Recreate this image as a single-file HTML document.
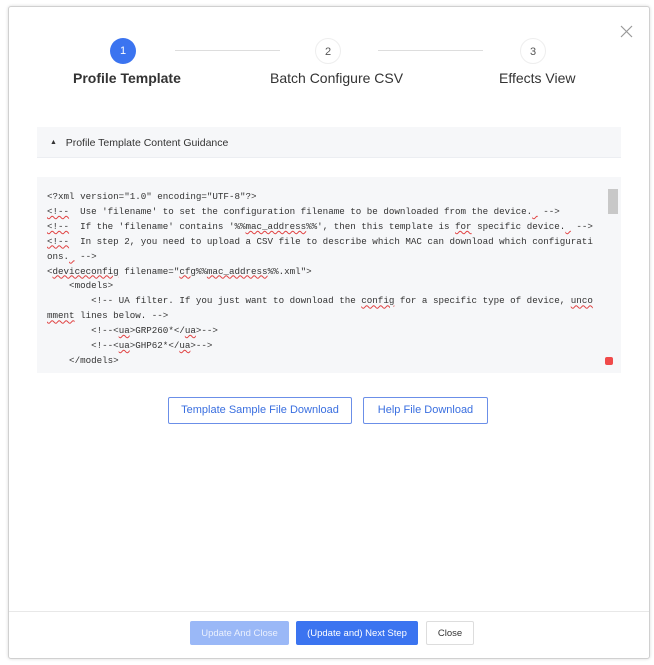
<!DOCTYPE html>
<html><head><style>
*{margin:0;padding:0;box-sizing:border-box}
body{width:654px;height:665px;background:#fff;font-family:"Liberation Sans",sans-serif;position:relative;overflow:hidden}
.modal{position:absolute;left:8px;top:6px;width:642px;height:653px;border:1px solid #d0d0d0;border-radius:3px;box-shadow:0 0 3px rgba(0,0,0,.15);background:#fff}
.abs{position:absolute}
.circ{position:absolute;width:26px;height:26px;border-radius:50%;font-size:11px;text-align:center;line-height:26px}
.line{position:absolute;height:1px;background:#ddd;top:50px}
.lbl{position:absolute;top:70px;font-size:14px;color:#333;white-space:nowrap}
.code{position:absolute;left:37px;top:177px;width:584px;height:196px;background:#f6f7f9;overflow:hidden}
pre{font-family:"Liberation Mono",monospace;font-size:9.2px;line-height:14.9px;color:#333;position:absolute;left:10px;top:13px}
u{text-decoration:underline wavy #e04040;text-decoration-thickness:1px}
.btn{position:absolute;height:27px;border:1px solid #6b8fe8;border-radius:2px;color:#3a6fe0;font-size:11px;text-align:center;line-height:25px;background:#fff}
.fb{position:absolute;top:621px;height:24px;font-size:9.5px;text-align:center;line-height:25px;border-radius:2px}
</style></head><body>
<div class="modal"></div>
<svg class="abs" style="left:620px;top:25px" width="13" height="13"><path d="M1 1L12 12M12 1L1 12" stroke="#999" stroke-width="1.2"/></svg>
<div class="circ" style="left:110px;top:38px;background:#3b74f0;color:#fff">1</div>
<div class="circ" style="left:315px;top:38px;border:1px solid #eee;color:#555">2</div>
<div class="circ" style="left:520px;top:38px;border:1px solid #eee;color:#555">3</div>
<div class="line" style="left:175px;width:105px"></div>
<div class="line" style="left:378px;width:105px"></div>
<div class="lbl" style="left:73px;font-weight:bold">Profile Template</div>
<div class="lbl" style="left:270px">Batch Configure CSV</div>
<div class="lbl" style="left:499px">Effects View</div>
<div class="abs" style="left:37px;top:127px;width:584px;height:31px;background:#f6f7f9;border-bottom:1px solid #eceef2"></div>
<div class="abs" style="left:50px;top:137px;font-size:10.5px;color:#333"><span style="font-size:7px;vertical-align:2px">▲</span>&nbsp;&nbsp;&nbsp;Profile Template Content Guidance</div>
<div class="code"><pre>&lt;?xml version="1.0" encoding="UTF-8"?&gt;
<u>&lt;!--</u>  Use 'filename' to set the configuration filename to be downloaded from the device.<u> </u> --&gt;
<u>&lt;!--</u>  If the 'filename' contains '%%<u>mac_address</u>%%', then this template is <u>for</u> specific device.<u> </u> --&gt;
<u>&lt;!--</u>  In step 2, you need to upload a CSV file to describe which MAC can download which configurati
ons.<u> </u> --&gt;
&lt;<u>deviceconfig</u> filename="<u>cfg</u>%%<u>mac_address</u>%%.xml"&gt;
    &lt;models&gt;
        &lt;!-- UA filter. If you just want to download the <u>config</u> for a specific type of device, <u>unco</u>
<u>mment</u> lines below. --&gt;
        &lt;!--&lt;<u>ua</u>&gt;GRP260*&lt;/<u>ua</u>&gt;--&gt;
        &lt;!--&lt;<u>ua</u>&gt;GHP62*&lt;/<u>ua</u>&gt;--&gt;
    &lt;/models&gt;</pre>
<div class="abs" style="left:571px;top:12px;width:10px;height:25px;background:#c8c8c8"></div>
<div class="abs" style="left:568px;top:180px;width:8px;height:8px;background:#f04a4a;border-radius:2px"></div>
</div>
<div class="btn" style="left:168px;top:397px;width:184px">Template Sample File Download</div>
<div class="btn" style="left:363px;top:397px;width:125px">Help File Download</div>
<div class="abs" style="left:9px;top:611px;width:640px;height:1px;background:#e8e8e8"></div>
<div class="fb" style="left:190px;width:99px;background:#9ab8f7;color:#eaf0fd">Update And Close</div>
<div class="fb" style="left:296px;width:122px;background:#3b74f0;color:#fff">(Update and) Next Step</div>
<div class="fb" style="left:426px;width:48px;border:1px solid #ddd;color:#333;line-height:23px">Close</div>
</body></html>
